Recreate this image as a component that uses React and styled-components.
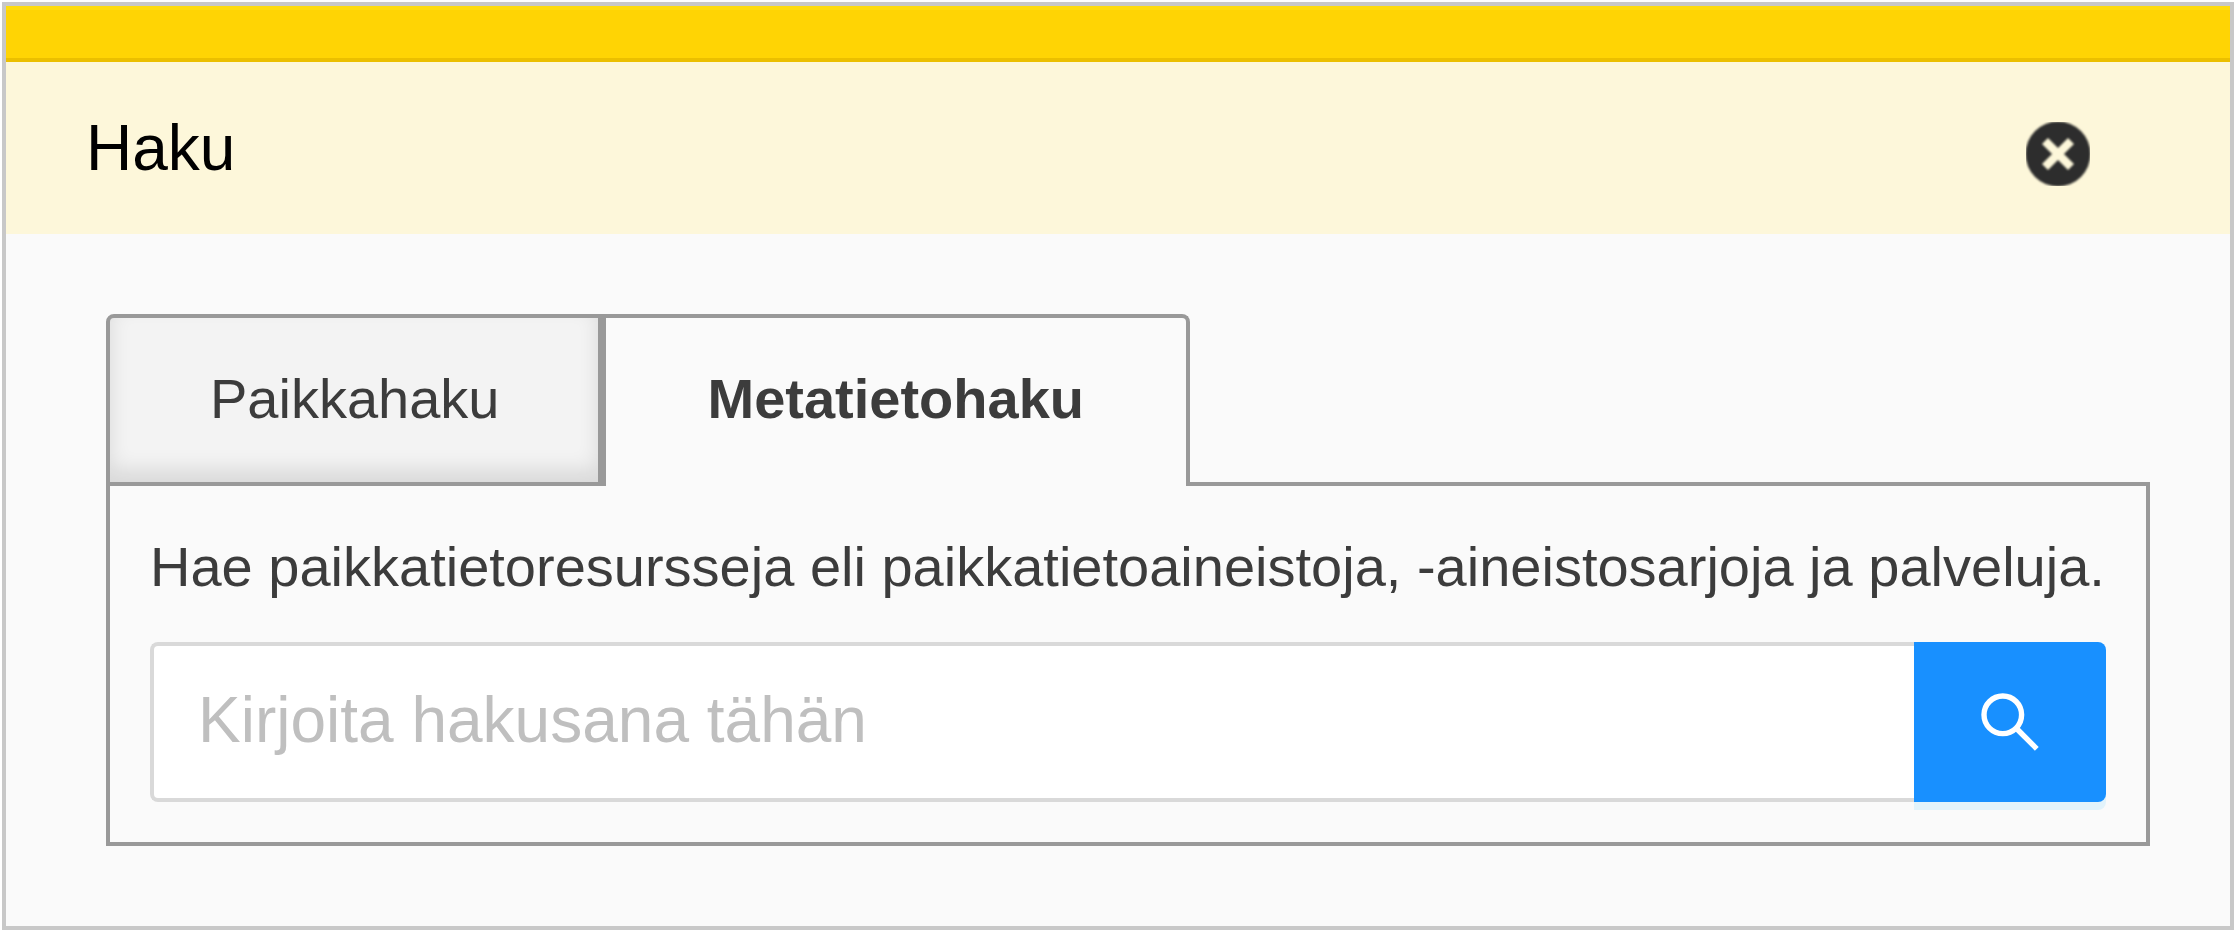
import React, { useState } from "react";
import styled, { createGlobalStyle } from "styled-components";

const GlobalStyle = createGlobalStyle`
  *, *::before, *::after { box-sizing: border-box; }
  body {
    margin: 0;
    background: #fff;
    font-family: "Liberation Sans", Arial, sans-serif;
  }
`;

const Flyout = styled.section`
  margin: 2px 2px 1px;
  border: 4px solid #c8c8c8;
  background: #fafafa;
  color: #3c3c3c;
`;

const DragBar = styled.div`
  height: 56px;
  background: #ffd404;
  border-top: 4px solid #ffdc0d;
  border-bottom: 4px solid #ebbf00;
`;

const Header = styled.header`
  display: flex;
  align-items: flex-start;
  justify-content: space-between;
  padding: 60px 140px 48px 80px;
  background: #fdf7da;
`;

const Title = styled.h1`
  margin: 0;
  color: #000;
  font-size: 64px;
  line-height: 52px;
  font-weight: 400;
`;

const CloseButton = styled.button`
  width: 64px;
  height: 64px;
  padding: 0;
  border: 0;
  background: none;
  cursor: pointer;

  svg { display: block; }
`;

const Content = styled.div`
  padding: 80px 80px 80px 100px;
`;

const TabList = styled.div`
  position: relative;
  display: flex;
  margin-bottom: -4px;
`;

const Tab = styled.button`
  padding: ${(p) => (p.$active ? "44px 102px 50px" : "44px 98px 46px 100px")};
  border: 4px solid #999;
  border-bottom-width: ${(p) => (p.$active ? 0 : 4)}px;
  background: ${(p) => (p.$active ? "#fafafa" : "#f3f3f3")};
  box-shadow: ${(p) => (p.$active ? "none" : "inset 0 -12px 20px rgba(0, 0, 0, 0.11)")};
  color: inherit;
  font-family: inherit;
  font-size: 56px;
  line-height: 74px;
  font-weight: ${(p) => (p.$active ? 700 : 400)};
  white-space: nowrap;
  cursor: pointer;

  &:first-child { border-top-left-radius: 8px; }
  &:last-child { border-top-right-radius: 8px; }
`;

const Panel = styled.div`
  padding: 40px;
  border: 4px solid #999;
`;

const Description = styled.label`
  display: block;
  margin-bottom: 34px;
  font-size: 56px;
  line-height: 82px;
  white-space: nowrap;
`;

const SearchForm = styled.form`
  display: flex;
  height: 160px;
`;

const SearchInput = styled.input`
  flex: 1;
  min-width: 0;
  padding: 0 44px 4px;
  border: 4px solid #d9d9d9;
  border-right: 0;
  border-radius: 8px 0 0 8px;
  background: #fff;
  color: inherit;
  font-family: inherit;
  font-size: 64px;
  outline: none;

  &::placeholder { color: #bfbfbf; opacity: 1; }
`;

const SearchButton = styled.button`
  display: flex;
  align-items: center;
  justify-content: center;
  width: 192px;
  padding: 0;
  border: 0;
  border-radius: 0 8px 8px 0;
  background: #1890ff;
  box-shadow: 0 8px 0 #e2f3fb;
  color: #fff;
  cursor: pointer;
`;

function CloseIcon() {
  return (
    <svg width="64" height="64" viewBox="0 0 64 64" aria-hidden="true">
      <defs>
        <filter id="soften" filterUnits="userSpaceOnUse" x="-8" y="-8" width="80" height="80" colorInterpolationFilters="sRGB">
          <feGaussianBlur stdDeviation="1.3" />
        </filter>
      </defs>
      <circle cx="32" cy="32" r="32.4" fill="#2d2d2d" filter="url(#soften)" />
      <path
        d="M19 19L45 45M45 19L19 45"
        fill="none"
        stroke="#fdf7da"
        strokeWidth="8.4"
        filter="url(#soften)"
      />
    </svg>
  );
}

function SearchIcon() {
  return (
    <svg width="64" height="64" viewBox="0 0 64 64" fill="none" stroke="currentColor" strokeWidth="5.4" aria-hidden="true">
      <circle cx="24.8" cy="24.8" r="18.8" />
      <path d="M38 38L58.8 58.8" />
    </svg>
  );
}

const TABS = [
  { id: "place", label: "Paikkahaku" },
  { id: "metadata", label: "Metatietohaku" },
];

export default function App() {
  const [active, setActive] = useState("metadata");
  const [query, setQuery] = useState("");

  return (
    <>
      <GlobalStyle />
      <Flyout>
        <DragBar />
        <Header>
          <Title>Haku</Title>
          <CloseButton type="button" aria-label="Sulje">
            <CloseIcon />
          </CloseButton>
        </Header>
        <Content>
          <TabList role="tablist">
            {TABS.map((tab) => (
              <Tab
                key={tab.id}
                type="button"
                role="tab"
                aria-selected={active === tab.id}
                $active={active === tab.id}
                onClick={() => setActive(tab.id)}
              >
                {tab.label}
              </Tab>
            ))}
          </TabList>
          <Panel role="tabpanel">
            <Description htmlFor="search">
              Hae paikkatietoresursseja eli paikkatietoaineistoja, -aineistosarjoja ja palveluja.
            </Description>
            <SearchForm onSubmit={(e) => e.preventDefault()}>
              <SearchInput
                id="search"
                type="text"
                placeholder="Kirjoita hakusana tähän"
                value={query}
                onChange={(e) => setQuery(e.target.value)}
              />
              <SearchButton type="submit" aria-label="Hae">
                <SearchIcon />
              </SearchButton>
            </SearchForm>
          </Panel>
        </Content>
      </Flyout>
    </>
  );
}
